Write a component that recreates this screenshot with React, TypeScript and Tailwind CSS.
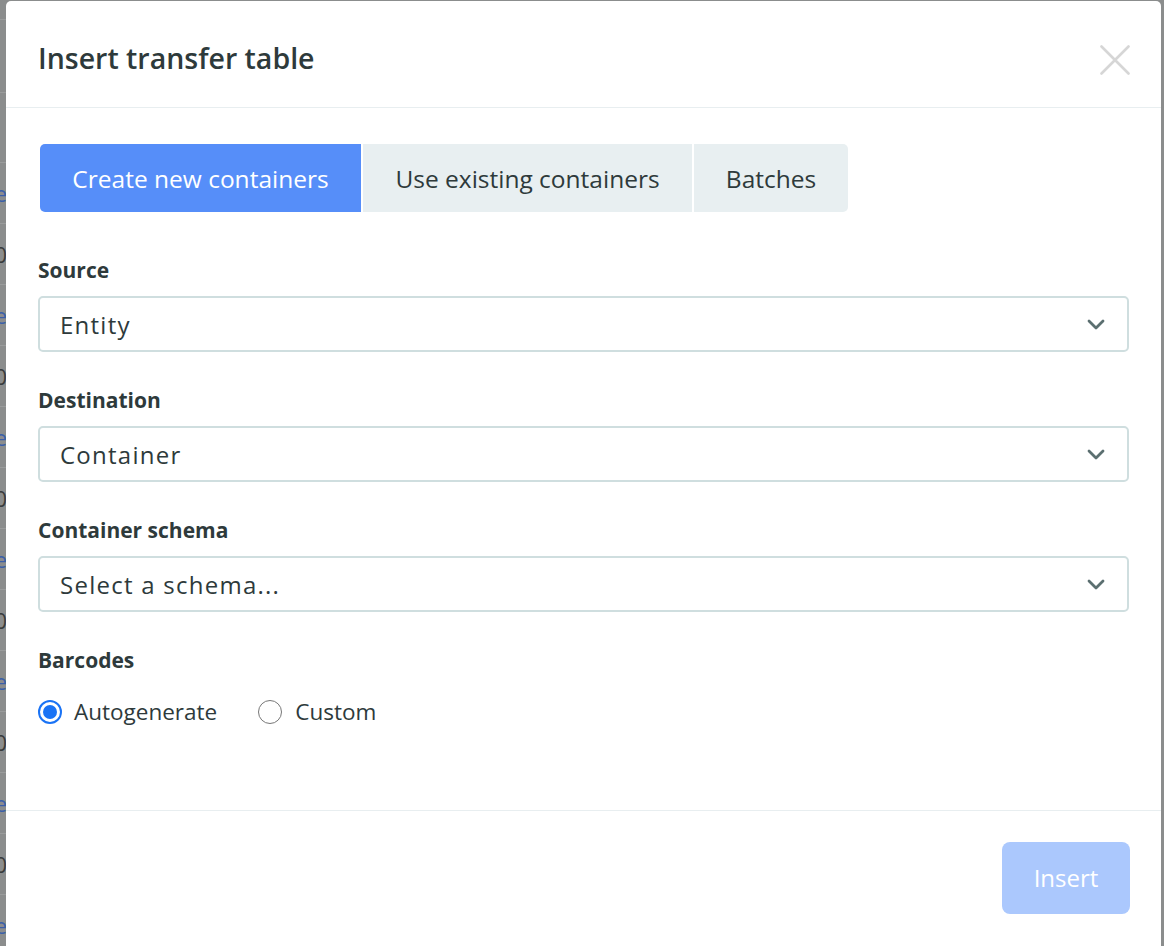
import React from "react";

const font = { fontFamily: "'Open Sans', Lato, sans-serif" };

function Chevron() {
  return (
    <svg width="18" height="11" viewBox="0 0 18 11" fill="none">
      <path d="M2 2 L9 9 L16 2" stroke="#5b6f70" strokeWidth="2.8" strokeLinecap="round" strokeLinejoin="round" />
    </svg>
  );
}

function SelectBox({ value }: { value: string }) {
  return (
    <div className="flex h-[56px] items-center justify-between rounded-[5px] border-2 border-[#cfdedf] pl-[20px] pr-[22px]">
      <span className="pt-[2px] text-[24px] tracking-[1.25px] text-[#2e3a3b]">{value}</span>
      <Chevron />
    </div>
  );
}

function Field({ label, value }: { label: string; value: string }) {
  return (
    <div className="mb-[36px]">
      <div className="mb-[14px] text-[21px] font-bold leading-[24px] text-[#2e3a3b]">{label}</div>
      <SelectBox value={value} />
    </div>
  );
}

export default function App() {
  const rows = Array.from({ length: 14 });
  return (
    <div className="relative h-[946px] w-[1164px] overflow-hidden bg-[#8b8d8d]" style={font}>
      {/* background page behind overlay */}
      <div className="flex flex-col">
        <div className="h-[20px] w-[7px] border-b border-[#9a9c9c]" />
        <div className="h-[73px] w-[7px] border-b border-[#9a9c9c]" />
        <div className="h-[70px] w-[7px] border-b border-[#9a9c9c]" />
        {rows.map((_, i) => (
          <div key={i} className="flex h-[61px] w-[7px] items-center justify-end overflow-hidden border-b border-[#9a9c9c]">
            <span className={"whitespace-nowrap text-[22px] " + (i % 2 === 0 ? "text-[#3b5fa8]" : "text-[#3a3c3c]")}>
              {i % 2 === 0 ? "Name" : "100"}
            </span>
          </div>
        ))}
      </div>

      {/* modal */}
      <div className="absolute left-[6px] right-[3px] top-[1px] bottom-[-20px] rounded-[5px] bg-white">
        <div className="flex h-[107px] items-center justify-between border-b border-[#e8eef0] pl-[32px] pr-[31px]">
          <h1 className="pt-[9px] text-[28.5px] font-semibold text-[#2e3a3b]">Insert transfer table</h1>
          <svg width="30" height="30" viewBox="0 0 30 30" fill="none" className="mt-[12px]">
            <path d="M1.5 1.5 L28.5 28.5 M28.5 1.5 L1.5 28.5" stroke="#d6d6d6" strokeWidth="2.6" strokeLinecap="round" />
          </svg>
        </div>

        <div className="px-[32px] pt-[36px]">
          <div className="ml-[2px] flex gap-[2px]">
            <div className="flex h-[68px] w-[321px] items-center justify-center rounded-l-[5px] bg-[#568ef9] pt-[2px] text-[24.5px] text-white">
              Create new containers
            </div>
            <div className="flex h-[68px] w-[329px] items-center justify-center bg-[#e8eff1] pt-[2px] text-[24.5px] text-[#2e3a3b]">
              Use existing containers
            </div>
            <div className="flex h-[68px] w-[154px] items-center justify-center rounded-r-[5px] bg-[#e8eff1] pt-[2px] text-[24.5px] text-[#2e3a3b]">
              Batches
            </div>
          </div>

          <div className="pt-[46px]">
            <Field label="Source" value="Entity" />
            <Field label="Destination" value="Container" />
            <Field label="Container schema" value="Select a schema..." />
            <div className="text-[21px] font-bold leading-[24px] text-[#2e3a3b]">Barcodes</div>
            <div className="mt-[28px] flex h-[24px] items-center">
              <span className="flex h-[24px] w-[24px] items-center justify-center rounded-full border-2 border-[#1a73f5]">
                <span className="h-[14px] w-[14px] rounded-full bg-[#1a73f5]" />
              </span>
              <span className="ml-[12px] text-[22.5px] text-[#2e3a3b]">Autogenerate</span>
              <span className="ml-[41px] h-[24px] w-[24px] rounded-full border-[1.5px] border-[#777]" />
              <span className="ml-[13px] text-[22.5px] text-[#2e3a3b]">Custom</span>
            </div>
          </div>
        </div>

        <div className="mt-[86px] flex justify-end border-t border-[#e8eef0] pr-[31px] pt-[31px]">
          <button className="flex h-[72px] w-[128px] items-center justify-center rounded-[8px] bg-[#abc8fd] text-[24px] text-white">
            Insert
          </button>
        </div>
      </div>
    </div>
  );
}
